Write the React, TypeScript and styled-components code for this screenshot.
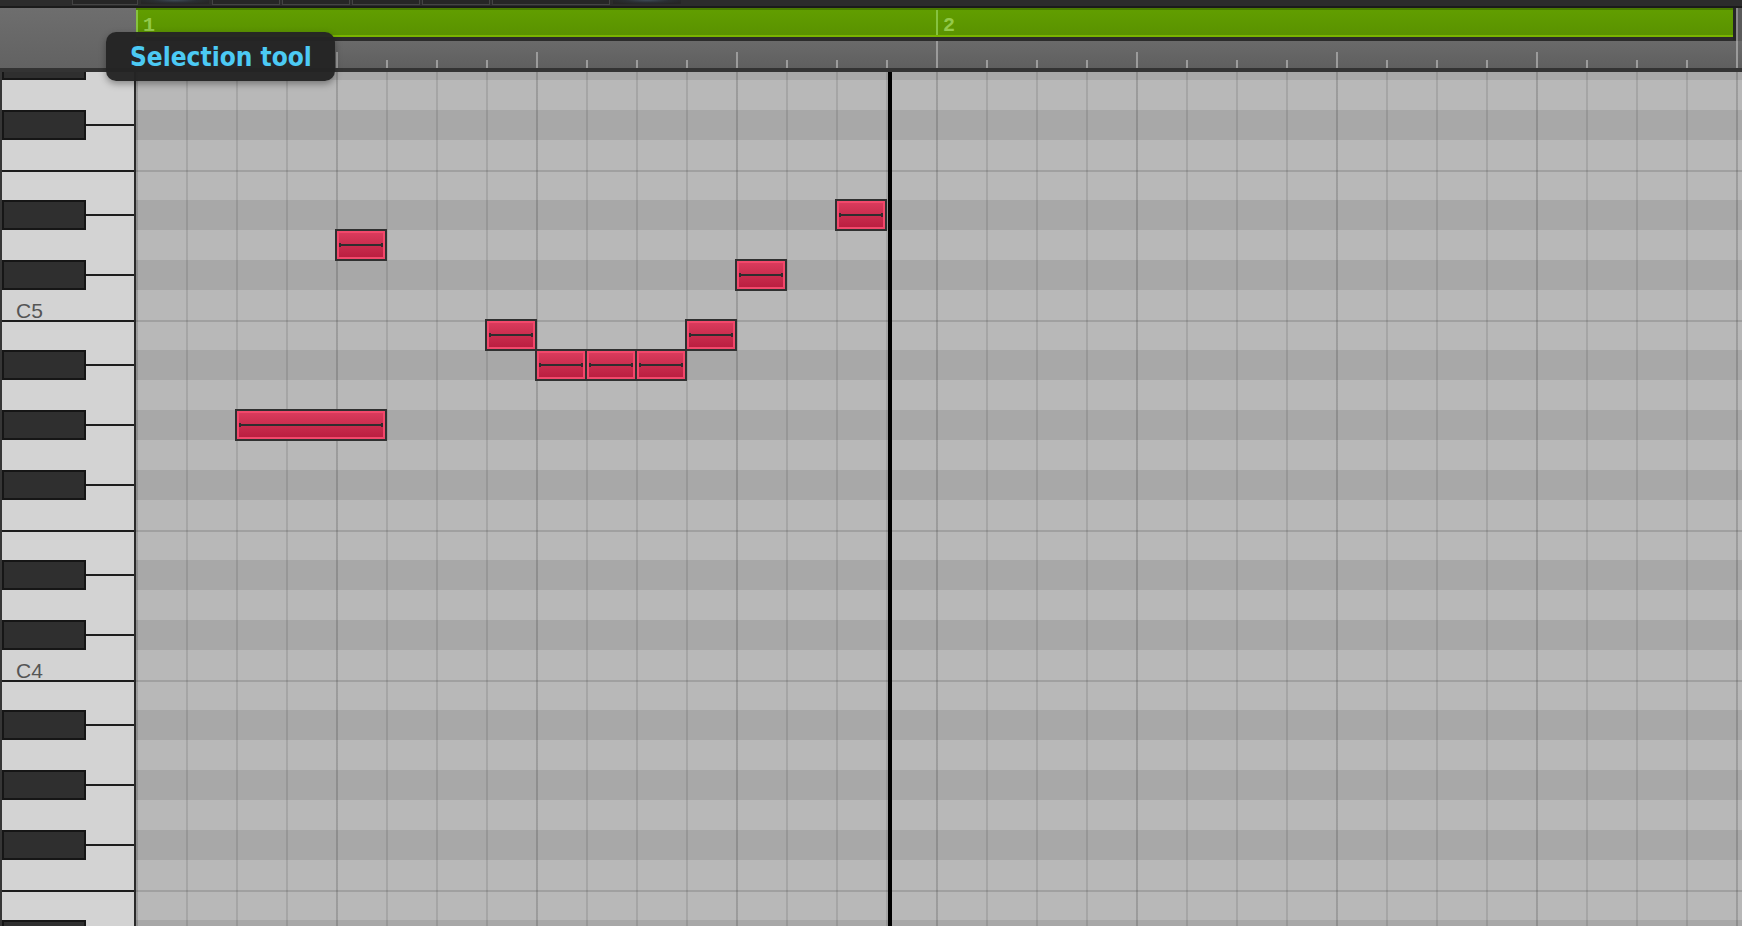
import React from "react";
import styled, { createGlobalStyle, css } from "styled-components";

const GlobalStyle = createGlobalStyle`
  html, body { margin: 0; padding: 0; background: #2b2b2b; overflow: hidden; }
  * { box-sizing: border-box; }
`;

const ROW_H = 30;
const STEP_W = 50;
const TOP_MIDI = 80; // G#5
const ROW_COUNT = 30;
const BLACK = [1, 3, 6, 8, 10];

type Note = { midi: number; col: number; len: number };
const NOTES: Note[] = [
  { midi: 68, col: 2, len: 3 },
  { midi: 74, col: 4, len: 1 },
  { midi: 71, col: 7, len: 1 },
  { midi: 70, col: 8, len: 1 },
  { midi: 70, col: 9, len: 1 },
  { midi: 70, col: 10, len: 1 },
  { midi: 71, col: 11, len: 1 },
  { midi: 73, col: 12, len: 1 },
  { midi: 75, col: 14, len: 1 },
];

const TOP_BUTTONS = [
  { w: 66 }, { w: 70, glow: true }, { w: 68 }, { w: 68 }, { w: 68 }, { w: 68 }, { w: 118 }, { w: 70, glow: true },
];

const Page = styled.div`
  width: 1742px;
  height: 926px;
  display: flex;
  flex-direction: column;
  overflow: hidden;
  position: relative;
  background: #2b2b2b;
`;

const TopBar = styled.div`
  height: 8px;
  flex: none;
  display: flex;
  gap: 2px;
  padding-left: 72px;
  background: #2c2c2c;
  border-bottom: 2px solid #1b1b1b;
`;

const TopButton = styled.div<{ $w: number; $glow?: boolean }>`
  width: ${(p) => p.$w}px;
  height: 5px;
  border: 1px solid #444;
  border-top: none;
  background: #262626;
  ${(p) =>
    p.$glow &&
    css`
      border-color: #2c2c2c;
      background: radial-gradient(ellipse at 50% 0%, #3e4b57 0%, #2a2e32 45%, #262626 80%);
    `}
`;

const Header = styled.div`
  height: 64px;
  flex: none;
  display: flex;
  border-bottom: 4px solid #333;
`;

const CornerPanel = styled.div`
  width: 136px;
  flex: none;
  background: linear-gradient(#6e6e6e, #626262);
`;

const Timeline = styled.div`
  flex: 1;
  display: flex;
  flex-direction: column;
  min-width: 0;
`;

const ClipLane = styled.div`
  height: 33px;
  display: flex;
  background: #2b2b2b;
`;

const Clip = styled.div`
  width: 1597px;
  height: 29px;
  flex: none;
  display: flex;
  border-top: 2px solid #4b7c00;
  border-bottom: 2px solid #79b400;
  background: linear-gradient(#619e00, #5a9200);
`;

const ClipEnd = styled.div`
  width: 3px;
  flex: none;
  height: 32px;
  background: #262626;
`;

const ClipRest = styled.div`
  flex: 1;
  background: #5a5a5a;
  border-left: 2px solid #8a8a8a;
`;

const BarSegment = styled.div<{ $w: number }>`
  width: ${(p) => p.$w}px;
  flex: none;
  border-left: 2px solid #86c240;
  padding: 6px 0 0 5px;
  font-family: "Liberation Mono", "DejaVu Sans Mono", monospace;
  font-weight: bold;
  font-size: 20px;
  line-height: 20px;
  color: #93c94a;
`;

const Ruler = styled.div`
  height: 27px;
  background-image:
    repeating-linear-gradient(90deg, #9b9b9b 0 2px, transparent 2px 800px),
    repeating-linear-gradient(90deg, #9b9b9b 0 2px, transparent 2px 200px),
    repeating-linear-gradient(90deg, #9b9b9b 0 2px, transparent 2px 50px),
    linear-gradient(#6a6a6a, #5f5f5f);
  background-size: 100% 100%, 100% 16px, 100% 8px, 100% 100%;
  background-position: 0 0, 0 100%, 0 100%, 0 0;
  background-repeat: no-repeat;
`;

const Body = styled.div`
  flex: 1;
  display: flex;
  overflow: hidden;
`;

const Piano = styled.div`
  width: 136px;
  flex: none;
  overflow: hidden;
  background: #d3d3d3;
  border-left: 2px solid #363636;
  border-right: 2px solid #2a2a2a;
`;

const KeyColumn = styled.div`
  display: flex;
  flex-direction: column;
  margin-top: -22px;
`;

const KeyRow = styled.div<{ $edge: boolean }>`
  height: ${ROW_H}px;
  flex: none;
  display: flex;
  align-items: center;
  ${(p) => p.$edge && css`border-top: 2px solid #1c1c1c;`}
`;

const BlackKey = styled.div`
  width: 84px;
  height: ${ROW_H}px;
  flex: none;
  background: #2f2f2f;
  border: 2px solid #161616;
`;

const KeySplit = styled.div`
  flex: 1;
  height: 2px;
  background: #1c1c1c;
`;

const KeyLabel = styled.span`
  align-self: flex-start;
  margin: 10px 0 0 14px;
  font-family: "Liberation Sans", Arial, sans-serif;
  font-size: 21px;
  line-height: 21px;
  color: #555;
`;

const Grid = styled.div`
  flex: 1;
  overflow: hidden;
  min-width: 0;
`;

const GridCanvas = styled.div`
  position: relative;
  margin-top: -22px;
  display: flex;
  flex-direction: column;

  &::after {
    content: "";
    position: absolute;
    inset: 0;
    z-index: 1;
    pointer-events: none;
    background-image:
      repeating-linear-gradient(90deg, rgba(0, 0, 0, 0.06) 0 2px, transparent 2px 200px),
      repeating-linear-gradient(90deg, rgba(0, 0, 0, 0.1) 0 2px, transparent 2px 50px);
  }
`;

const GridRow = styled.div<{ $dark: boolean; $edge: boolean }>`
  height: ${ROW_H}px;
  flex: none;
  background: ${(p) => (p.$dark ? "#a8a8a8" : "#b8b8b8")};
  ${(p) => p.$edge && css`border-top: 2px solid rgba(0, 0, 0, 0.13);`}
`;

const NoteBox = styled.div`
  position: absolute;
  z-index: 2;
  height: 32px;
  display: flex;
  align-items: center;
  padding: 0 2px;
  border: 2px solid #303030;
  background: linear-gradient(#dc3d5e, #b81c3e);
  box-shadow: inset 0 0 0 2px #f2486b;
`;

const NoteLine = styled.div`
  flex: 1;
  height: 4px;
  border-left: 2px solid #2e2e2e;
  border-right: 2px solid #2e2e2e;
  background: linear-gradient(#2e2e2e, #2e2e2e) center / 100% 2px no-repeat;
`;

const Playhead = styled.div`
  position: absolute;
  z-index: 3;
  top: 0;
  bottom: 0;
  left: 752px;
  width: 4px;
  background: #000;
`;

const Tooltip = styled.div`
  position: absolute;
  z-index: 10;
  left: 106px;
  top: 32px;
  height: 49px;
  padding: 0 23px 0 24px;
  display: flex;
  align-items: center;
  border-radius: 10px;
  background: rgba(36, 36, 36, 0.97);
  box-shadow: 0 3px 7px rgba(0, 0, 0, 0.35);
  font-family: "DejaVu Sans Condensed", "DejaVu Sans", sans-serif;
  font-stretch: condensed;
  font-weight: bold;
  font-size: 26px;
  color: #4ccaf4;
  white-space: nowrap;
`;

const rows = Array.from({ length: ROW_COUNT }, (_, i) => {
  const midi = TOP_MIDI - i;
  const pc = midi % 12;
  return {
    midi,
    black: BLACK.includes(pc),
    edge: pc === 4 || pc === 11,
    label: pc === 0 ? `C${Math.floor(midi / 12) - 1}` : null,
  };
});

export default function App() {
  return (
    <>
      <GlobalStyle />
      <Page>
        <TopBar>
          {TOP_BUTTONS.map((b, i) => (
            <TopButton key={i} $w={b.w} $glow={b.glow} />
          ))}
        </TopBar>
        <Header>
          <CornerPanel />
          <Timeline>
            <ClipLane>
              <Clip>
                <BarSegment $w={800}>1</BarSegment>
                <BarSegment $w={797}>2</BarSegment>
              </Clip>
              <ClipEnd />
              <ClipRest />
            </ClipLane>
            <Ruler />
          </Timeline>
        </Header>
        <Body>
          <Piano>
            <KeyColumn>
              {rows.map((r) => (
                <KeyRow key={r.midi} $edge={r.edge}>
                  {r.black ? (
                    <>
                      <BlackKey />
                      <KeySplit />
                    </>
                  ) : r.label ? (
                    <KeyLabel>{r.label}</KeyLabel>
                  ) : null}
                </KeyRow>
              ))}
            </KeyColumn>
          </Piano>
          <Grid>
            <GridCanvas>
              {rows.map((r) => (
                <GridRow key={r.midi} $dark={r.black} $edge={r.edge} />
              ))}
              {NOTES.map((n, i) => (
                <NoteBox
                  key={i}
                  style={{
                    top: (TOP_MIDI - n.midi) * ROW_H - 1,
                    left: n.col * STEP_W - 1,
                    width: n.len * STEP_W + 2,
                  }}
                >
                  <NoteLine />
                </NoteBox>
              ))}
              <Playhead />
            </GridCanvas>
          </Grid>
        </Body>
        <Tooltip>Selection tool</Tooltip>
      </Page>
    </>
  );
}
